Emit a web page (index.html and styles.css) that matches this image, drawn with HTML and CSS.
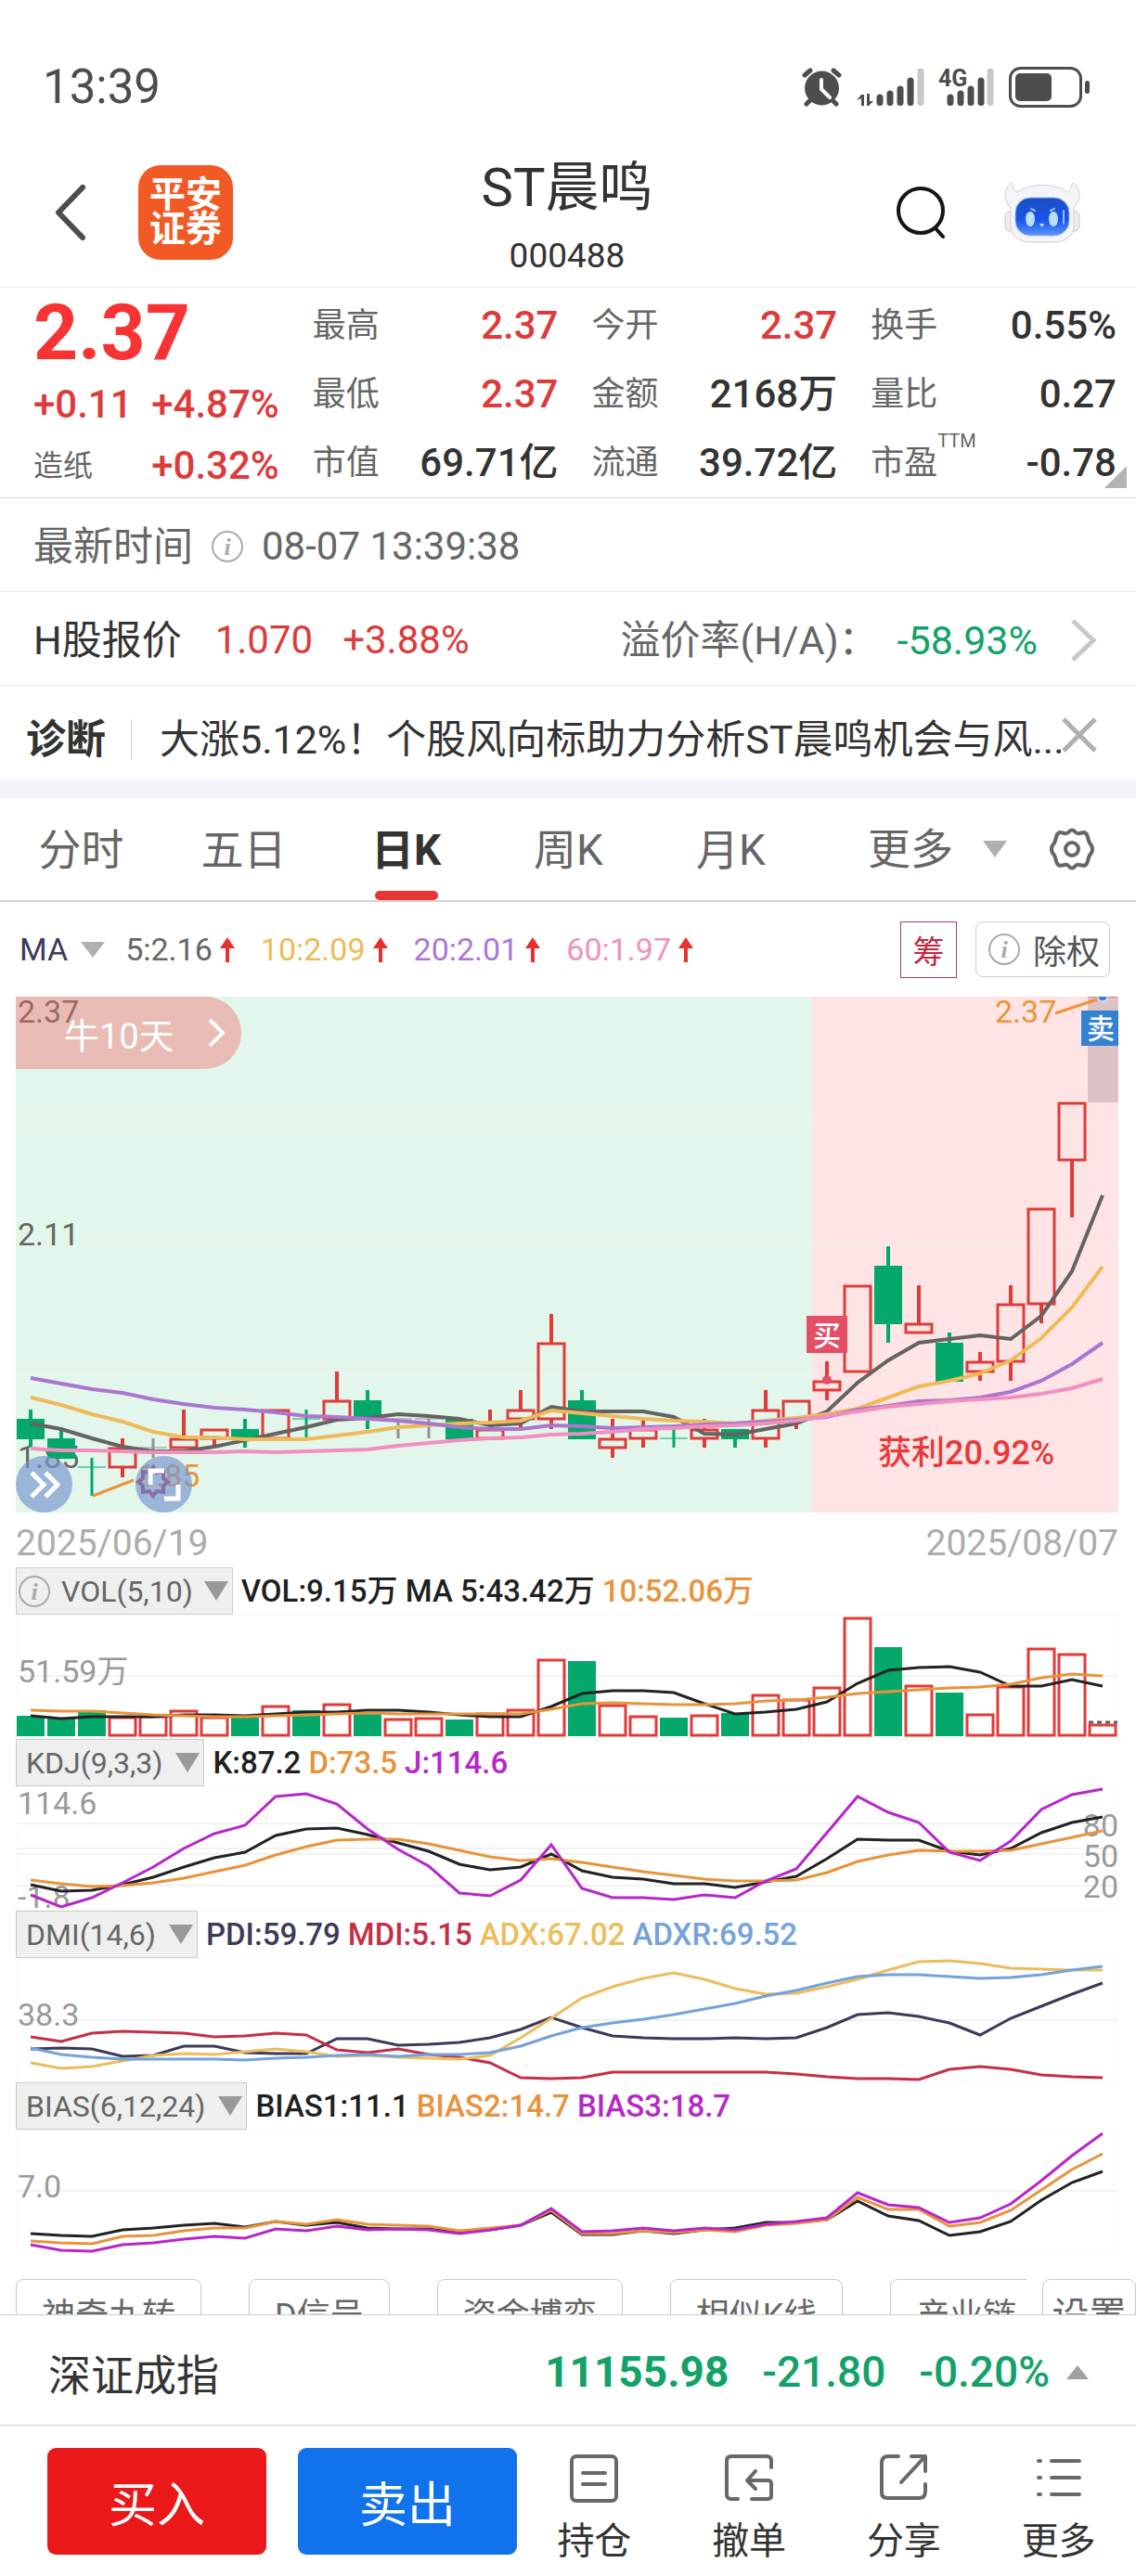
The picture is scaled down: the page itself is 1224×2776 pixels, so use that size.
FILE: index.html
```html
<!DOCTYPE html>
<html lang="zh-CN">
<head>
<meta charset="utf-8">
<meta name="viewport" content="width=device-width">
<title>ST晨鸣 000488</title>
<link rel="stylesheet" href="styles.css">
</head>
<body>
<div class="status">
  <span class="clock">13:39</span>
  <svg class="status-icons" viewBox="0 0 310 44" aria-hidden="true">
    <g fill="none" stroke="#4d4d4d" stroke-width="5" stroke-linecap="round">
      <path d="M3 9l6-5M34 4l6 5M9 36l-4 4M33 36l4 4"/>
    </g>
    <circle cx="21.500" cy="23" r="18.500" fill="#4d4d4d"/>
    <path d="M21 14v10l9 9" fill="none" stroke="#fff" stroke-width="4" stroke-linecap="round" stroke-linejoin="round"/>
    <path d="M59 36l5-6h3v12h-3v-8zM70 29h3v8h4l-5 5h-2z" fill="#4d4d4d"/>
    <g stroke="#4d4d4d" stroke-width="7" stroke-linecap="round">
      <path d="M84 33v5.500M95 29v9.500M106 24v14.500M117 15v23.500"/>
      <path d="M160 33v5.500M171 29v9.500M182 24v14.500M193 15v23.500"/>
      <path d="M128 5v33.500M203 5v33.500" stroke="#c8c8c8"/>
    </g>
    <text x="147" y="21" font-size="25" font-weight="700" fill="#4d4d4d">4G</text>
    <rect x="224.500" y="1.500" width="76" height="41" rx="11" fill="none" stroke="#4d4d4d" stroke-width="3"/>
    <rect x="230" y="7" width="39" height="30" rx="5" fill="#4d4d4d"/>
    <rect x="305" y="15" width="5" height="14" rx="2.500" fill="#4d4d4d"/>
  </svg>
</div>

<header class="header">
  <div class="header-side">
    <button class="plain" aria-label="返回"><svg width="36" height="64" viewBox="0 0 36 64"><path d="M31 5L5 32l26 27" fill="none" stroke="#4d4d4d" stroke-width="6" stroke-linecap="round" stroke-linejoin="round"/></svg></button>
    <a class="logo" href="#"><span>平安</span><span>证券</span></a>
  </div>
  <div class="title">
    <h1>ST晨鸣</h1>
    <p>000488</p>
  </div>
  <div class="header-side header-right">
    <button class="plain" aria-label="搜索"><svg width="54" height="58" viewBox="0 0 54 58"><circle cx="27" cy="27" r="24" fill="none" stroke="#151515" stroke-width="4"/><path d="M43 46l8 9" stroke="#151515" stroke-width="4" stroke-linecap="round"/></svg></button>
    <button class="plain" aria-label="智能助手"><svg width="82" height="66" viewBox="0 0 82 66">
      <defs><linearGradient id="face" x1="0" y1="0" x2="0" y2="1"><stop offset="0" stop-color="#1c4fc4"/><stop offset=".6" stop-color="#1b55ea"/><stop offset="1" stop-color="#5a97f8"/></linearGradient></defs>
      <rect x="1" y="32" width="12" height="21" rx="5" fill="#f3e9e9" stroke="#c9c9cf"/>
      <rect x="69" y="32" width="12" height="21" rx="5" fill="#f3e9e9" stroke="#c9c9cf"/>
      <path d="M8 1c-9 6-9 19-1 27v20c0 10 9 17 22 17h24c13 0 22-7 22-17V28c8-8 8-21-1-27-2 1-1 9-6 10C55 1 27 1 14 11 9 10 10 2 8 1z" fill="#f4f5f8" stroke="#cdd0d7"/>
      <rect x="12" y="17" width="58" height="41" rx="16" fill="url(#face)" stroke="#a9b8e0"/>
      <ellipse cx="28" cy="40" rx="5" ry="8" fill="#b8e1fb"/><ellipse cx="53" cy="40" rx="5" ry="8" fill="#b8e1fb"/>
      <path d="M29 29l4 2M50 31l4-2M64 31v14" stroke="#8fbdf8" stroke-width="2" stroke-linecap="round"/>
      <path d="M38 45h5l-2 4z" fill="#b8e1fb"/>
    </svg></button>
  </div>
</header>

<section class="quote">
  <div class="price">
    <strong class="last">2.37</strong>
    <p class="change"><span>+0.11</span><span>+4.87%</span></p>
    <p class="sector"><a href="#">造纸</a><span>+0.32%</span></p>
  </div>
  <dl class="stats">
    <div><dt>最高</dt><dd class="up">2.37</dd></div>
    <div><dt>最低</dt><dd class="up">2.37</dd></div>
    <div><dt>市值</dt><dd>69.71亿</dd></div>
  </dl>
  <dl class="stats">
    <div><dt>今开</dt><dd class="up">2.37</dd></div>
    <div><dt>金额</dt><dd>2168万</dd></div>
    <div><dt>流通</dt><dd>39.72亿</dd></div>
  </dl>
  <dl class="stats">
    <div><dt>换手</dt><dd>0.55%</dd></div>
    <div><dt>量比</dt><dd>0.27</dd></div>
    <div><dt>市盈<sup>TTM</sup></dt><dd>-0.78</dd></div>
  </dl>
</section>

<section class="row time-row">
  <span>最新时间</span>
  <svg class="info" viewBox="0 0 34 34"><circle cx="17" cy="17" r="16"/><text x="17" y="26">i</text></svg>
  <time>08-07 13:39:38</time>
</section>

<a class="row h-row" href="#">
  <span class="dark">H股报价</span>
  <span class="up h-price">1.070</span>
  <span class="up">+3.88%</span>
  <span class="premium">溢价率(H/A)：</span>
  <span class="down">-58.93%</span>
  <svg width="30" height="48" viewBox="0 0 30 48"><path d="M4 3l22 21L4 45" fill="none" stroke="#c8c8c8" stroke-width="5"/></svg>
</a>

<section class="row diag-row">
  <b>诊断</b>
  <a href="#">大涨5.12%！个股风向标助力分析ST晨鸣机会与风...</a>
  <button class="plain" aria-label="关闭"><svg width="38" height="38" viewBox="0 0 38 38"><path d="M2 2l34 34M36 2L2 36" stroke="#b0b0b0" stroke-width="5"/></svg></button>
</section>

<nav class="tabs">
  <a href="#">分时</a>
  <a href="#">五日</a>
  <a href="#" class="active">日K</a>
  <a href="#">周K</a>
  <a href="#">月K</a>
  <button class="plain more">更多<svg width="26" height="18" viewBox="0 0 26 18"><path d="M0 0h26L13 18z" fill="#b0b0b0"/></svg></button>
  <button class="plain" aria-label="设置"><svg width="48" height="48" viewBox="0 0 48 48" fill="none" stroke="#666" stroke-width="4" stroke-linejoin="round"><path d="M16 7q3 1 5-2 3-3 6 0 2 3 5 2l5-1q3 1 4 5l1 4q1 3 3 5 2 4 0 8-2 2-3 5l-1 4q-1 4-4 5l-5-1q-3-1-5 2-3 3-6 0-2-3-5-2l-5 1q-3-1-4-5l-1-4q-1-3-3-5-2-4 0-8 2-2 3-5l1-4q1-4 4-5z"/><circle cx="24" cy="24" r="7"/></svg></button>
</nav>

<main class="charts">
  <div class="ma-row">
    <button class="plain ma-pick">MA<svg width="26" height="17" viewBox="0 0 26 17"><path d="M0 0h26L13 17z" fill="#b0b0b0"/></svg></button>
    <span class="ma5">5:2.16<svg class="arrow" viewBox="0 0 16 27"><path d="M8 0l8 12h-6v15H6V12H0z"/></svg></span>
    <span class="ma10">10:2.09<svg class="arrow" viewBox="0 0 16 27"><path d="M8 0l8 12h-6v15H6V12H0z"/></svg></span>
    <span class="ma20">20:2.01<svg class="arrow" viewBox="0 0 16 27"><path d="M8 0l8 12h-6v15H6V12H0z"/></svg></span>
    <span class="ma60">60:1.97<svg class="arrow" viewBox="0 0 16 27"><path d="M8 0l8 12h-6v15H6V12H0z"/></svg></span>
    <button class="chip">筹</button>
    <button class="adjust"><svg class="info" viewBox="0 0 34 34"><circle cx="17" cy="17" r="16"/><text x="17" y="26">i</text></svg>除权</button>
  </div>

  <div class="kline">
    <svg id="kline" class="chart" viewBox="0 0 1188 556" role="img" aria-label="日K线图">
      <rect width="858" height="556" fill="#e3f6eb"/>
      <rect x="858" width="330" height="556" fill="#ffe4e5"/>
      <path d="M0 133h1188M0 268h1188M0 401h1188" stroke="#e9efe6"/>
      <g class="axis dark-axis">
        <text x="2" y="28">2.37</text><text x="2" y="268">2.11</text><text x="2" y="508">1.85</text>
      </g>
      <rect x="1155" width="33" height="114" fill="#dcc2c4"/>
      <g class="plot"></g>
      <path d="M83 538l44-17M1120 18l45-15" stroke="#ee9336" stroke-width="3"/>
      <g class="axis orange-axis"><text x="132" y="528">1.85</text><text x="1055" y="28">2.37</text></g>
      <path d="M148 507l4 6 7-1 0 7 5 4-5 4 0 7-7-1-4 5-4-5-7 1 0-7-5-4 5-4 0-7 7 1z" fill="none" stroke="#a5224f" stroke-width="4"/>
      <circle cx="874" cy="413" r="5" fill="#e44f67"/>
      <circle cx="1171" cy="0" r="5" fill="#3483d2" stroke="#fff"/>
      <rect x="852" y="344" width="44" height="40" fill="#e44f67"/>
      <rect x="1148" y="15" width="40" height="38" fill="#3483d2"/>
      <g class="mark"><text x="874" y="376">买</text><text x="1169" y="45">卖</text></g>
      <text class="profit" x="929" y="504">获利20.92%</text>
    </svg>
    <button class="bull">牛10天<svg width="20" height="32" viewBox="0 0 20 32"><path d="M2 2l14 14L2 30" fill="none" stroke="#fff" stroke-width="4"/></svg></button>
    <div class="tools">
      <button aria-label="展开"><svg width="34" height="30" viewBox="0 0 34 30"><path d="M3 2l13 13L3 28M18 2l13 13-13 13" fill="none" stroke="#fff" stroke-width="5"/></svg></button>
      <button aria-label="全屏"><svg width="36" height="36" viewBox="0 0 36 36"><path d="M3 18V3h15M33 18v15H18" fill="none" stroke="#fff" stroke-width="5"/></svg></button>
    </div>
  </div>
  <div class="dates"><time>2025/06/19</time><time>2025/08/07</time></div>

  <section class="panel">
    <div class="legend">
      <button class="with-info"><svg class="info" viewBox="0 0 34 34"><circle cx="17" cy="17" r="16"/><text x="17" y="26">i</text></svg>VOL(5,10)<svg class="tri" viewBox="0 0 26 21"><path d="M0 0h26L13 21z"/></svg></button>
      <span class="c-black">VOL:9.15万 MA 5:43.42万</span><span class="c-orange">10:52.06万</span>
    </div>
    <svg id="vol" class="chart" viewBox="0 0 1188 134" role="img" aria-label="成交量"><rect class="frame" x="0" y="0" width="1188" height="133"/><path class="grid" d="M0 66h1188"/><g class="axis"><text x="2" y="73">51.59万</text></g><g class="plot"></g></svg>
  </section>
  <section class="panel">
    <div class="legend">
      <button>KDJ(9,3,3)<svg class="tri" viewBox="0 0 26 21"><path d="M0 0h26L13 21z"/></svg></button>
      <span class="c-black">K:87.2</span><span class="c-orange">D:73.5</span><span class="c-magenta">J:114.6</span>
    </div>
    <svg id="kdj" class="chart" viewBox="0 0 1188 134" role="img" aria-label="KDJ"><rect class="frame" x="0" y="0" width="1188" height="133"/><path class="grid" d="M0 40h1188M0 67h1188M0 73h1188M0 107h1188"/><g class="axis"><text x="2" y="30">114.6</text><text x="2" y="131">-1.8</text><g text-anchor="end"><text x="1188" y="54">80</text><text x="1188" y="87">50</text><text x="1188" y="120">20</text></g></g><g class="plot"></g></svg>
  </section>
  <section class="panel">
    <div class="legend">
      <button>DMI(14,6)<svg class="tri" viewBox="0 0 26 21"><path d="M0 0h26L13 21z"/></svg></button>
      <span class="c-navy">PDI:59.79</span><span class="c-crimson">MDI:5.15</span><span class="c-gold">ADX:67.02</span><span class="c-blue">ADXR:69.52</span>
    </div>
    <svg id="dmi" class="chart" viewBox="0 0 1188 134" role="img" aria-label="DMI"><rect class="frame" x="0" y="0" width="1188" height="133"/><path class="grid" d="M0 67h1188"/><g class="axis"><text x="2" y="73">38.3</text></g><g class="plot"></g></svg>
  </section>
  <section class="panel">
    <div class="legend">
      <button>BIAS(6,12,24)<svg class="tri" viewBox="0 0 26 21"><path d="M0 0h26L13 21z"/></svg></button>
      <span class="c-black">BIAS1:11.1</span><span class="c-orange">BIAS2:14.7</span><span class="c-magenta">BIAS3:18.7</span>
    </div>
    <svg id="bias" class="chart" viewBox="0 0 1188 134" role="img" aria-label="BIAS"><rect class="frame" x="0" y="0" width="1188" height="133"/><path class="grid" d="M0 66h1188"/><g class="axis"><text x="2" y="73">7.0</text></g><g class="plot"></g></svg>
  </section>
</main>

<div class="signals">
  <div class="signal-list">
    <button>神奇九转</button><button>D信号</button><button>资金博弈</button><button>相似K线</button><button>产业链</button>
  </div>
  <button class="setup">设置</button>
</div>

<a class="index-row" href="#">
  <span class="index-name">深证成指</span>
  <b>11155.98</b><span>-21.80</span><span>-0.20%</span>
  <svg width="24" height="15" viewBox="0 0 24 15"><path d="M0 15L12 0l12 15z" fill="#a0a0a0"/></svg>
</a>

<footer class="actions">
  <button class="trade buy">买入</button>
  <button class="trade sell">卖出</button>
  <nav class="nav">
    <a href="#"><svg viewBox="0 0 52 52"><rect x="2" y="2" width="48" height="48" rx="5"/><path d="M14 20h24M14 32h24"/></svg>持仓</a>
    <a href="#"><svg viewBox="0 0 52 52"><path d="M50 14V7q0-5-5-5H7Q2 2 2 7v36q0 5 5 5h7M29 48h16q5 0 5-3V32q0-4-3-4H25M33 18l-9 10 9 9"/></svg>撤单</a>
    <a href="#"><svg viewBox="0 0 52 52"><path d="M20 2H9Q2 2 2 9v32q0 6 6 6h34q7 0 7-7V32M34 2h15v16M48 3L23 30"/></svg>分享</a>
    <a href="#"><svg viewBox="0 0 52 52"><path d="M4 7h2M18 7h30M4 25h2M18 25h30M4 43h2M18 43h30"/></svg>更多</a>
  </nav>
</footer>
<script src="charts.js"></script>
</body>
</html>
```
FILE: styles.css
```css
* { box-sizing: border-box; margin: 0; padding: 0; }
body {
  font-family: Roboto, "Noto Sans CJK SC", sans-serif;
  background: #fff;
  color: #333;
  overflow-x: hidden;
}
button { font: inherit; color: inherit; cursor: pointer; background: none; border: 0; }
a { color: inherit; text-decoration: none; }
svg { flex: none; }
.plain { display: flex; align-items: center; }
.up { color: #dd3b3b; }
.down { color: #12a268; }
.dark { color: #333; }

.status {
  display: flex;
  justify-content: space-between;
  align-items: center;
  padding: 46px 50px 0 46px;
  height: 141px;
}
.clock { font-size: 51px; line-height: 60px; color: #4d4d4d; }
.status-icons { width: 310px; height: 44px; }

.header {
  display: flex;
  align-items: center;
  height: 169px;
  padding: 8px 60px 0 58px;
  border-bottom: 1px solid #ebebeb;
}
.header-side { flex: 1; display: flex; align-items: center; gap: 55px; }
.header-right { justify-content: flex-end; gap: 63px; }
.logo {
  display: flex;
  flex-direction: column;
  align-items: center;
  justify-content: center;
  width: 102px;
  height: 102px;
  border-radius: 24px;
  background: #f15a24;
  color: #fff;
  font-size: 39px;
  font-weight: 700;
  line-height: 37px;
}
.title { text-align: center; padding-top: 18px; }
.title h1 { font-size: 58px; font-weight: 400; line-height: 76px; }
.title p { font-size: 37px; line-height: 72px; }

.quote {
  position: relative;
  display: grid;
  grid-template-columns: repeat(4, 1fr);
  gap: 36px;
  padding: 4px 21px 0 36px;
  border-bottom: 1px solid #d5d5d5;
}
.quote::after {
  content: "";
  position: absolute;
  right: 10px;
  bottom: 10px;
  border-left: 24px solid transparent;
  border-bottom: 24px solid #b3b3b3;
}
.price { color: #dd3b3b; font-size: 42px; font-weight: 500; white-space: nowrap; }
.last { display: block; font-size: 84px; font-weight: 700; line-height: 90px; color: #f93333; }
.change, .sector { display: flex; justify-content: space-between; }
.change { line-height: 64px; }
.sector { line-height: 68px; }
.sector a { font-size: 32px; font-weight: 400; color: #666; }
.stats div { display: flex; justify-content: space-between; line-height: 74px; white-space: nowrap; }
.stats dt { font-size: 36px; color: #666; position: relative; }
.stats dd { font-size: 42px; font-weight: 500; }
.stats sup { position: absolute; left: 100%; top: -24px; font-size: 20px; }

.row {
  display: flex;
  align-items: center;
  min-height: 101px;
  padding: 4px 36px 0;
  border-bottom: 1px solid #ebebeb;
  font-size: 43px;
  line-height: 60px;
  color: #666;
  white-space: nowrap;
}
.info { width: 34px; height: 34px; }
.info circle { fill: none; stroke: #aaa; stroke-width: 2; }
.info text { font: italic 700 26px "Liberation Serif", serif; fill: #aaa; text-anchor: middle; }
.time-row { gap: 20px; }
.time-row time { font-size: 42px; }
.h-row .up { font-size: 42px; }
.h-price { margin: 0 32px 0 36px; }
.premium { margin-left: auto; }
.h-row .down { margin: 0 34px 0 20px; }
.h-row svg { margin-right: 6px; }
.diag-row { padding: 14px 42px 0 28px; border-bottom: 0; color: #333; }
.diag-row b { padding-right: 27px; border-right: 1px solid #ccc; line-height: 44px; margin-right: 30px; }
.diag-row a { flex: 1; min-width: 0; }
.diag-row button { padding-bottom: 10px; }

.tabs {
  display: flex;
  align-items: stretch;
  height: 132px;
  padding-right: 45px;
  border-top: 20px solid #f3f4f9;
  border-bottom: 2px solid #d4d4d4;
  font-size: 46px;
  line-height: 112px;
  color: #666;
}
.tabs a { position: relative; flex: 0 1 175px; text-align: center; }
.tabs .active { font-weight: 700; color: #333; }
.tabs .active::after {
  content: "";
  position: absolute;
  left: 50%;
  bottom: 0;
  width: 68px;
  height: 10px;
  margin-left: -34px;
  border-radius: 5px;
  background: #e63533;
}
.tabs .more { gap: 32px; margin-left: auto; margin-right: 46px; }

.charts { padding: 0 19px 27px 17px; }
.ma-row {
  display: flex;
  align-items: center;
  gap: 28px;
  height: 102px;
  padding: 0 9px 0 4px;
  font-size: 34px;
  white-space: nowrap;
}
.ma-row span { display: flex; align-items: center; gap: 8px; }
.ma-pick { gap: 14px; color: #3d3960; margin-right: -6px; }
.ma5 { color: #666; }
.ma10 { color: #eebb58; }
.ma20 { color: #ab76d6; }
.ma60 { color: #ee93c0; }
.arrow { width: 16px; height: 27px; fill: #e8302e; }
.chip {
  margin-left: auto;
  width: 61px;
  height: 61px;
  border: 1px solid #a84058;
  color: #c02a40;
  font-size: 34px;
}
.adjust {
  display: flex;
  align-items: center;
  gap: 14px;
  height: 60px;
  padding: 0 10px 0 13px;
  margin-left: -8px;
  border: 1px solid #ccc;
  border-radius: 8px;
  font-size: 36px;
  color: #555;
}

.chart { display: block; width: 100%; height: auto; }
.frame { fill: none; stroke: #f6f6f6; }
.grid { stroke: #f2f2f2; stroke-width: 2; }
.axis { font-size: 34px; fill: #9a9a9a; }
.dark-axis { fill: #646662; }
.orange-axis { fill: #ee9336; }
.mark { font-size: 30px; font-weight: 500; fill: #fff; text-anchor: middle; }
.profit { font-size: 36px; font-weight: 500; fill: #e8393a; }
.plot polyline { fill: none; stroke-width: 3; }
.rise { fill: none; stroke: #e03b38; stroke-width: 3; }
.fall { fill: #03a86a; stroke: #03a86a; stroke-width: 2; }
.flat { fill: none; stroke: #8e9396; stroke-width: 3; }
.pending { fill: none; stroke: #6d5555; stroke-width: 3; stroke-dasharray: 5 4; }

.kline { position: relative; }
.kline polyline { stroke-width: 4; }
.bull {
  position: absolute;
  top: 0;
  left: 0;
  display: flex;
  align-items: center;
  gap: 36px;
  width: 243px;
  height: 78px;
  padding-left: 52px;
  border-radius: 0 39px 39px 0;
  background: rgba(238, 107, 105, 0.42);
  color: #fff;
  font-size: 38px;
  white-space: nowrap;
}
.tools { position: absolute; left: 0; bottom: 0; display: flex; gap: 68px; }
.tools button {
  display: flex;
  align-items: center;
  justify-content: center;
  width: 61px;
  height: 61px;
  border-radius: 50%;
  background: rgba(120, 150, 205, 0.68);
}
.dates {
  display: flex;
  justify-content: space-between;
  padding-top: 8px;
  font-size: 39px;
  line-height: 51px;
  color: #acacac;
}

.legend {
  display: flex;
  align-items: center;
  gap: 8px;
  height: 51px;
  font-size: 33px;
  font-weight: 500;
  line-height: 48px;
  white-space: nowrap;
}
.legend button {
  display: flex;
  align-items: center;
  gap: 14px;
  height: 51px;
  margin-right: 1px;
  padding: 0 4px 0 10px;
  border: 1px solid #ccc;
  background: #efefef;
  color: #666;
  font-size: 32px;
  font-weight: 400;
}
.legend .with-info { padding-left: 2px; gap: 12px; }
.tri { width: 26px; height: 21px; fill: #999; }
.c-black { color: #1f1f1f; }
.c-orange { color: #e8933c; }
.c-magenta { color: #b627c9; }
.c-navy { color: #3c3959; }
.c-crimson { color: #c52f46; }
.c-gold { color: #ebbd5d; }
.c-blue { color: #74a2da; }

.signals { display: flex; height: 38px; overflow: hidden; gap: 17px; }
.signal-list { display: flex; flex: 1; gap: 51px; min-width: 0; overflow: hidden; padding-left: 17px; }
.signals button {
  flex: none;
  height: 72px;
  padding: 0 27px;
  border: 1px solid #c8c8c8;
  border-radius: 8px;
  font-size: 36px;
  color: #666;
}
.signals .setup { width: 101px; padding: 0 8px; font-size: 40px; }

.index-row {
  display: flex;
  align-items: center;
  min-height: 120px;
  padding: 4px 51px 0 52px;
  border-top: 1px solid #ccc;
  border-bottom: 1px solid #ccc;
  gap: 36px;
  font-size: 46px;
  font-weight: 500;
  color: #12a268;
}
.index-row svg { margin-left: -18px; }
.index-name { margin-right: auto; font-weight: 400; color: #333; }

.actions { display: flex; align-items: center; height: 162px; padding: 0 0 0 51px; }
.trade {
  width: 236px;
  height: 115px;
  border-radius: 9px;
  color: #fff;
  font-size: 52px;
}
.buy { background: #ea1819; margin-right: 34px; }
.sell { background: #1073ec; }
.nav { flex: 1; display: flex; padding-top: 24px; }
.nav a { flex: 1; display: flex; flex-direction: column; align-items: center; gap: 12px; font-size: 40px; line-height: 60px; }
.nav svg { width: 52px; height: 52px; fill: none; stroke: #686868; stroke-width: 4; stroke-linecap: round; stroke-linejoin: round; }
```
FILE: charts.js
```js
// Bars are evenly spaced; every series has one entry per trading day.
const STEP = 33, FIRST = 16, HALF = 15;
const px = i => FIRST + STEP * i;
const plot = id => document.querySelector('#' + id + ' .plot');

function line(ys, color) {
  const pts = ys.map((y, i) => px(i) + ',' + y).join(' ');
  return `<polyline points="${pts}" stroke="${color}"/>`;
}

// open, close, high, low
const candles = [
  [1.93,1.91,1.94,1.90],[1.91,1.89,1.92,1.89],[1.88,1.88,1.89,1.85],[1.88,1.90,1.91,1.87],
  [1.90,1.90,1.91,1.89],[1.90,1.91,1.94,1.90],[1.91,1.92,1.92,1.90],[1.92,1.91,1.93,1.90],
  [1.91,1.94,1.94,1.91],[1.93,1.93,1.94,1.91],[1.93,1.95,1.98,1.93],[1.95,1.93,1.96,1.92],
  [1.93,1.93,1.93,1.91],[1.93,1.93,1.93,1.91],[1.93,1.91,1.93,1.91],[1.91,1.92,1.94,1.91],
  [1.93,1.94,1.96,1.92],[1.93,2.01,2.04,1.92],[1.95,1.91,1.96,1.91],[1.90,1.91,1.93,1.89],
  [1.91,1.92,1.93,1.90],[1.91,1.91,1.92,1.90],[1.91,1.92,1.93,1.90],[1.92,1.91,1.92,1.90],
  [1.91,1.94,1.96,1.90],[1.93,1.95,1.95,1.92],[1.96,1.97,1.99,1.95],[1.98,2.07,2.07,1.98],
  [2.09,2.03,2.11,2.01],[2.02,2.03,2.07,2.02],[2.01,1.97,2.02,1.97],[1.98,1.99,2.00,1.97],
  [1.99,2.05,2.07,1.97],[2.05,2.15,2.15,2.03],[2.20,2.26,2.26,2.14],[2.37,2.37,2.37,2.37]
];
const FLAT_GREY = [4, 12, 13], FLAT_GREEN = [2, 9, 21];
const price = p => Math.round((2.37 - p) * 1035);

const candleMarks = candles.map(([o, c, h, l], i) => {
  const x = px(i), top = price(Math.max(o, c)), bottom = price(Math.min(o, c));
  const kind = FLAT_GREY.includes(i) ? 'flat' : (FLAT_GREEN.includes(i) || c < o) ? 'fall' : 'rise';
  if (o === c) {
    return `<path class="${kind}" d="M${x} ${price(h)}V${price(l)}" style="stroke-width:3"/>` +
           `<path class="${kind}" d="M${x - HALF} ${top}h30" style="stroke-width:1"/>`;
  }
  return `<path class="${kind}" d="M${x} ${price(h)}V${top}M${x} ${bottom}V${price(l)}" style="stroke-width:4"/>` +
         `<rect class="${kind}" x="${x - 14}" y="${top + 1}" width="28" height="${bottom - top - 1}"/>`;
}).join('');

plot('kline').innerHTML = candleMarks +
  line([460,466,476,485,490,490,485,478,471,464,456,454,450,452,455,462,460,442,447,447,447,453,471,472,466,460,447,416,392,373,369,365,369,344,296,214], '#646462') +
  line([432,440,450,458,469,475,475,477,477,477,473,469,464,462,460,459,457,446,449,452,455,457,458,460,457,454,450,444,432,420,414,406,392,368,335,291], '#eebb58') +
  line([411,417,423,427,434,439,443,445,448,452,453,455,457,460,464,466,466,462,463,465,464,463,461,460,458,456,453,445,441,436,435,432,426,414,396,373], '#ab76d0') +
  line([487,489,489,490,491,491,491,490,491,490,489,488,484,481,478,476,475,472,471,469,466,465,463,462,460,457,452,447,442,439,436,434,432,428,422,412], '#f08fc0');

const volumeTops = [110,112,104,111,110,104,111,110,99,104,97,107,113,112,114,107,103,49,51,98,110,112,109,107,87,92,79,4,36,77,85,108,78,37,43,119];
const FALLING = [0,1,2,7,9,11,14,18,21,23,28,30];
plot('vol').innerHTML = volumeTops.map((y, i) =>
  `<rect class="${FALLING.includes(i) ? 'fall' : 'rise'}" x="${px(i) - 14}" y="${y}" width="28" height="${130 - y}"/>`).join('') +
  '<path class="pending" d="M1156 116h31"/>' +
  line([109,112,110,110,110,108,108,109,107,105,105,103,103,105,108,110,110,99,85,82,82,84,96,107,105,102,94,74,60,57,56,62,77,77,70,77], '#222') +
  line([103,104,104,106,108,109,110,110,109,108,107,106,107,107,107,107,107,102,96,95,96,97,97,96,93,92,89,85,83,81,79,78,75,68,64,66], '#e8933c');

plot('kdj').innerHTML =
  line([106,113,112,106,98,87,77,71,53,46,45,52,61,70,84,90,87,73,91,98,100,105,105,109,103,97,78,57,58,58,70,74,67,50,39,33], '#222') +
  line([101,105,108,107,104,99,92,85,74,65,58,57,57,62,69,76,80,78,82,87,92,96,100,102,102,101,93,81,74,69,70,70,69,62,55,48], '#e8933c') +
  line([117,130,120,104,87,67,51,42,11,8,19,46,68,86,115,118,101,63,110,120,120,122,117,120,102,89,50,11,28,39,71,80,59,25,9,3], '#b627c9');

plot('dmi').innerHTML =
  line([98,97,98,106,105,95,95,102,103,103,87,87,94,93,91,86,77,64,75,84,86,87,87,86,87,86,75,61,59,63,70,83,65,52,39,27], '#3c3959') +
  line([85,90,81,79,80,81,85,84,81,83,99,102,98,104,107,113,129,130,129,123,123,123,123,123,123,125,128,130,130,131,120,117,120,126,128,129], '#c52f46') +
  line([113,119,117,111,105,103,104,101,98,101,106,105,107,108,109,105,86,65,43,31,22,16,23,33,39,38,31,23,13,4,3,6,11,12,13,13], '#ebbd5d') +
  line([97,104,107,109,109,109,109,110,108,107,105,104,106,104,104,102,95,84,75,70,66,61,55,49,41,35,27,20,18,18,20,22,21,18,13,9], '#74a2da');

plot('bias').innerHTML =
  line([112,114,115,108,106,103,101,105,99,103,100,106,107,107,111,108,103,89,113,113,109,112,108,106,100,100,97,77,93,98,114,110,99,76,57,45], '#222') +
  line([120,122,123,115,114,109,106,106,99,102,97,102,103,104,109,106,103,87,112,112,109,111,108,110,103,101,97,73,86,86,104,100,87,65,43,26], '#e8933c') +
  line([124,130,131,124,122,118,115,117,107,109,104,108,107,108,112,108,103,85,110,109,106,109,106,108,102,99,95,68,81,84,100,95,80,55,28,4], '#b627c9');
```
